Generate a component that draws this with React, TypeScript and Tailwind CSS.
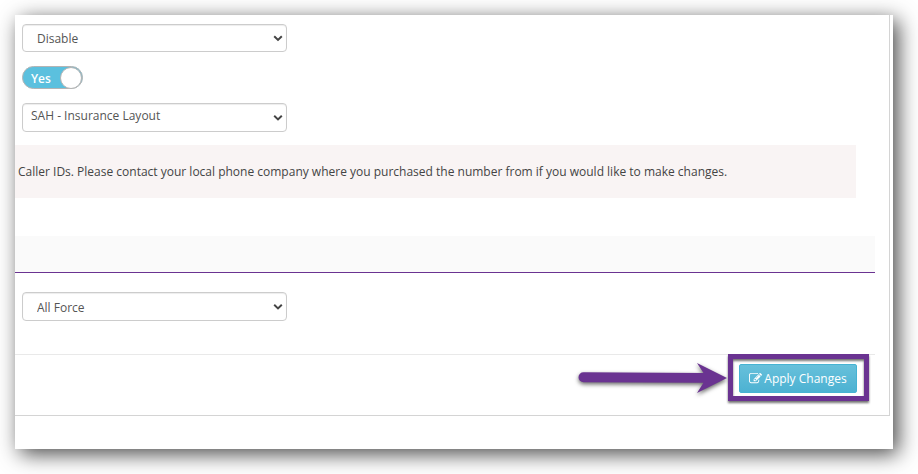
import React, { useState } from 'react'

type SelectFieldProps = {
    label: string
    options: string[]
    className: string
}

function SelectField({ label, options, className }: SelectFieldProps) {
    return (
        <div className="relative w-[265px] max-w-full">
            <select
                aria-label={label}
                className={`block w-full appearance-none rounded-[4px] border border-[#ccc] bg-white pr-6 text-[12px] leading-4 text-[#555] shadow-[inset_0_1px_1px_rgba(0,0,0,0.075)] ${className}`}
            >
                {options.map((option) => (
                    <option key={option}>{option}</option>
                ))}
            </select>
            <svg className="pointer-events-none absolute top-0 right-1 h-full w-[10px]" viewBox="0 0 10 10" fill="none">
                <path d="M1.2 3.3L5 6.9L8.8 3.3" stroke="#444" strokeWidth="2" />
            </svg>
        </div>
    )
}

function Toggle() {
    const [on, setOn] = useState(true)

    return (
        <label
            className={`flex h-[23px] w-[61px] cursor-pointer items-center rounded-full border border-[#b4b4b4] text-[12px] leading-4 font-semibold ${on ? 'bg-[#5bc0de] text-white' : 'flex-row-reverse bg-white text-[#555]'}`}
        >
            <input
                type="checkbox"
                aria-label="Enabled"
                className="sr-only"
                checked={on}
                onChange={(e) => setOn(e.target.checked)}
            />
            <span className="flex-1 pt-[2px] pl-2">{on ? 'Yes' : 'No'}</span>
            <span className="size-[22px] shrink-0 rounded-full border border-[#b4b4b4] bg-white" />
        </label>
    )
}

function Arrow() {
    return (
        <svg
            className="pointer-events-none absolute top-[-4px] right-[128px] h-[36px] w-[152px] drop-shadow-[0_2px_2px_rgba(0,0,0,0.6)]"
            viewBox="0 0 152 36"
        >
            <path
                d="M6.500 12.300L126.500 13L120 3L150 18L120 33L126.500 22.800L6.500 22.300A5 5 0 0 1 6.500 12.300Z"
                fill="#6a3391"
            />
        </svg>
    )
}

function EditIcon() {
    return (
        <svg className="size-[13px]" viewBox="0 0 1792 1792" fill="currentColor">
            <path d="M888 1184l116-116-152-152-116 116v56h96v96h56zm440-720q-16-16-33 1l-350 350q-17 17-1 33t33-1l350-350q17-17 1-33zm80 594v190q0 119-84.5 203.500t-203.500 84.500h-832q-119 0-203.500-84.500t-84.500-203.500v-832q0-119 84.500-203.500t203.500-84.500h832q63 0 117 25 15 7 18 23 3 17-9 29l-49 49q-14 14-32 8-23-6-45-6h-832q-66 0-113 47t-47 113v832q0 66 47 113t113 47h832q66 0 113-47t47-113v-126q0-13 9-22l64-64q15-15 35-7t20 29zm-96-738l288 288-672 672h-288v-288zm444 132l-92 92-288-288 92-92q28-28 68-28t68 28l152 152q28 28 28 68t-28 68z" />
        </svg>
    )
}

export default function App() {
    return (
        <div className="bg-white pt-[15px] pr-[25px] pb-[25px] pl-[15px] font-['Open_Sans',sans-serif]">
            <main className="bg-white pr-[3px] pb-[33px] shadow-[5px_5px_20px_rgba(0,0,0,0.72)]">
                <div className="border-r border-b border-[#d4d4d4] pr-[14px]">
                    <div className="flex flex-col items-start gap-[14px] pt-[9px] pl-[7px]">
                        <SelectField label="Status" options={['Disable', 'Enable']} className="h-7 pt-[2px] pl-[14px]" />
                        <Toggle />
                        <SelectField label="Layout" options={['SAH - Insurance Layout']} className="h-[29px] pb-[3px] pl-2" />
                    </div>

                    <p className="mt-[13px] mr-[19px] bg-[#f9f4f4] px-[3px] py-[17px] text-[12px] leading-[19px] text-[#444]">
                        Caller IDs. Please contact your local phone company where you purchased the number from if you would like to make changes.
                    </p>

                    <div className="mt-[38px] h-[37px] border-b border-[#6a3391] bg-[#fafafa]" />

                    <div className="pt-[19px] pb-[33px] pl-[7px]">
                        <SelectField label="Force" options={['All Force']} className="h-[29px] pt-[2px] pl-[14px]" />
                    </div>

                    <footer className="flex justify-end border-t border-[#e9e9e9] pt-[9px] pr-[18px] pb-[22px]">
                        <div className="relative">
                            <Arrow />
                            <div className="pointer-events-none absolute -top-[10px] -right-[12px] -bottom-[8px] -left-[11px] border-[5px] border-[#6a3391] drop-shadow-[0_2px_1px_rgba(0,0,0,0.55)]" />
                            <button
                                type="button"
                                className="relative flex h-[29px] w-[118px] items-center justify-center gap-[2px] rounded-[2px] border border-[#46b3d3] bg-linear-to-b from-[#67c0db] to-[#4cb2d2] text-[12px] leading-4 font-medium whitespace-nowrap text-white"
                            >
                                <EditIcon />
                                Apply Changes
                            </button>
                        </div>
                    </footer>
                </div>
            </main>
        </div>
    )
}
